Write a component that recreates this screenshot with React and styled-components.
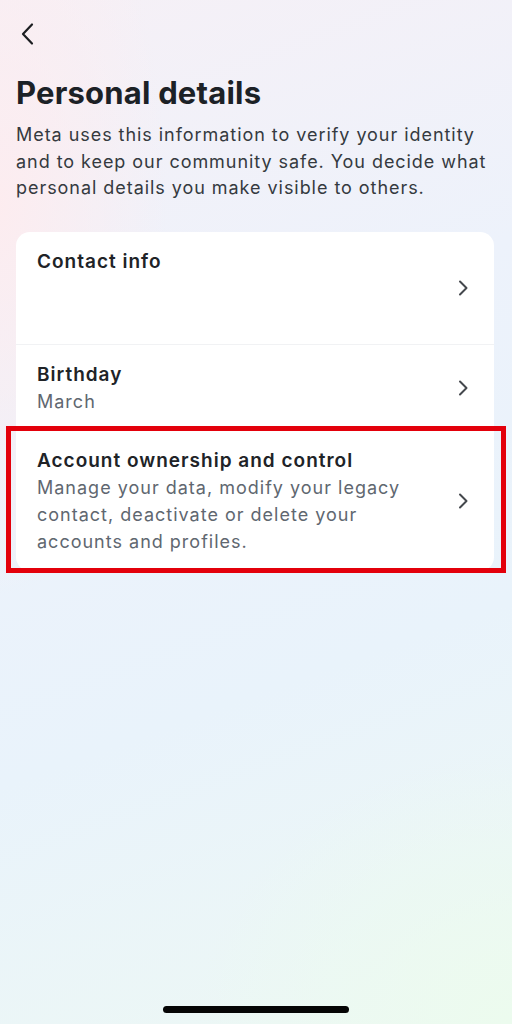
import React from "react";
import styled, { createGlobalStyle } from "styled-components";

const GlobalStyle = createGlobalStyle`
  html, body {
    margin: 0;
    padding: 0;
  }
  body {
    font-family: Inter, "Open Sans", "Liberation Sans", sans-serif;
  }
`;

const Screen = styled.div`
  position: relative;
  width: 512px;
  height: 1024px;
  overflow: hidden;
  display: flex;
  flex-direction: column;
  padding: 0 16px;
  box-sizing: border-box;
  background:
    radial-gradient(ellipse 240px 560px at 0% 20%, rgba(253, 236, 239, 0.95), rgba(253, 236, 239, 0) 70%),
    radial-gradient(ellipse 420px 360px at 100% 100%, rgba(236, 251, 238, 1), rgba(236, 251, 238, 0) 75%),
    linear-gradient(160deg, #f6f0f6 0%, #edf2fb 35%, #e9f3fb 65%, #edf8f4 100%);
`;

const BackButton = styled.button`
  align-self: flex-start;
  margin: 20px 0 0 -2px;
  padding: 0;
  width: 28px;
  height: 28px;
  border: none;
  background: transparent;
  display: flex;
  align-items: center;
  justify-content: center;
  cursor: pointer;
`;

const Title = styled.h1`
  margin: 26px 0 0;
  font-size: 31px;
  line-height: 38px;
  font-weight: 700;
  color: #1c2126;
  letter-spacing: 0.2px;
`;

const Intro = styled.p`
  margin: 10px 0 0;
  font-size: 18px;
  line-height: 26.5px;
  letter-spacing: 0.95px;
  color: #353a3f;
`;

const Card = styled.div`
  margin: 30px 2px 0 0;
  background: #ffffff;
  border-radius: 14px;
  display: flex;
  flex-direction: column;
`;

const Row = styled.div`
  position: relative;
  display: flex;
  align-items: center;
  gap: 18px;
  min-height: ${(p) => p.$minHeight || 0}px;
  padding: 16px 25px 16px 21px;
  box-sizing: border-box;
  border-top: ${(p) => (p.$divider ? "1px solid #f1f2f4" : "none")};
  cursor: pointer;

  ${(p) =>
    p.$highlight &&
    `
    &::after {
      content: "";
      position: absolute;
      left: -10px;
      right: -12px;
      top: -5px;
      bottom: -2px;
      border: 5px solid #e3000b;
      pointer-events: none;
    }
  `}
`;

const RowText = styled.div`
  flex: 1;
  display: flex;
  flex-direction: column;
  align-self: ${(p) => (p.$top ? "flex-start" : "center")};
`;

const RowTitle = styled.div`
  font-size: 19px;
  line-height: 27px;
  font-weight: 600;
  letter-spacing: 1px;
  color: #202327;
`;

const RowSub = styled.div`
  font-size: 18px;
  line-height: 27px;
  letter-spacing: 1px;
  color: #606770;
`;

const HomeBar = styled.div`
  position: absolute;
  left: 50%;
  bottom: 11px;
  width: 186px;
  height: 7px;
  margin-left: -93px;
  border-radius: 4px;
  background: #050505;
`;

const Chevron = () => (
  <svg width="12" height="18" viewBox="0 0 12 18" fill="none">
    <path
      d="M3 2.5L9.5 9L3 15.5"
      stroke="#44484d"
      strokeWidth="2"
      strokeLinecap="round"
      strokeLinejoin="round"
    />
  </svg>
);

const BackIcon = () => (
  <svg width="16" height="24" viewBox="0 0 16 24" fill="none">
    <path
      d="M12 2.5L3 12L12 21.5"
      stroke="#1c1e21"
      strokeWidth="2.2"
      strokeLinecap="round"
      strokeLinejoin="round"
    />
  </svg>
);

export default function App() {
  return (
    <>
      <GlobalStyle />
      <Screen>
        <BackButton aria-label="Back">
          <BackIcon />
        </BackButton>
        <Title>Personal details</Title>
        <Intro>
          Meta uses this information to verify your identity and to keep our
          community safe. You decide what personal details you make visible to
          others.
        </Intro>
        <Card>
          <Row $minHeight={112}>
            <RowText $top>
              <RowTitle>Contact info</RowTitle>
            </RowText>
            <Chevron />
          </Row>
          <Row $divider>
            <RowText>
              <RowTitle>Birthday</RowTitle>
              <RowSub>March</RowSub>
            </RowText>
            <Chevron />
          </Row>
          <Row $highlight>
            <RowText>
              <RowTitle>Account ownership and control</RowTitle>
              <RowSub>
                Manage your data, modify your legacy contact, deactivate or
                delete your accounts and profiles.
              </RowSub>
            </RowText>
            <Chevron />
          </Row>
        </Card>
        <HomeBar />
      </Screen>
    </>
  );
}
